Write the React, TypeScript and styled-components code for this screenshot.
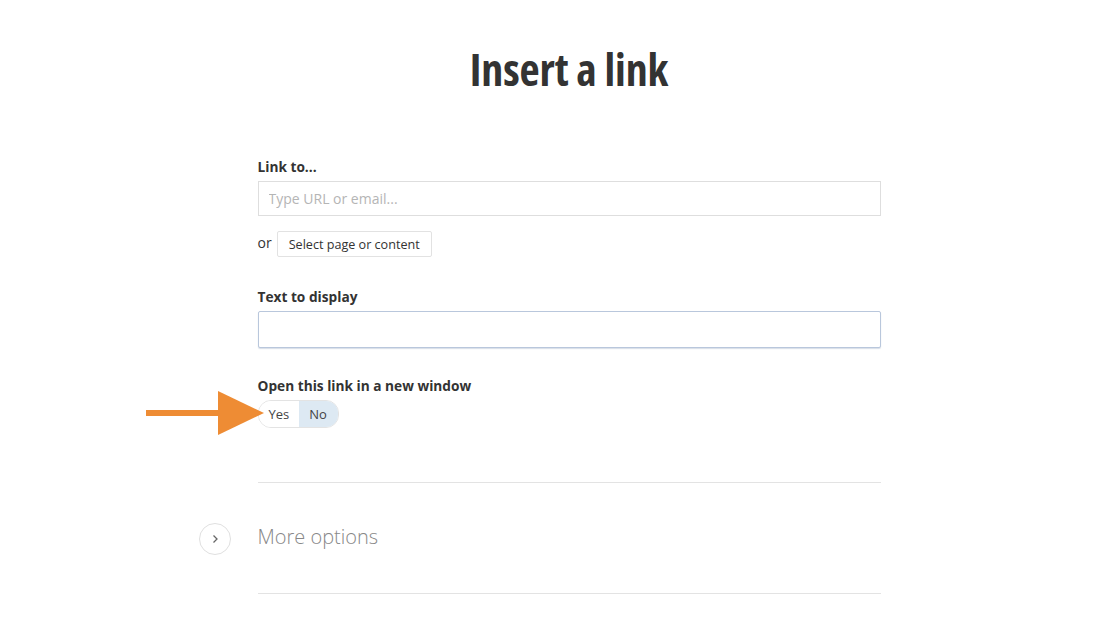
import * as React from 'react';
import styled, { createGlobalStyle } from 'styled-components';

const GlobalStyle = createGlobalStyle`
  html, body {
    margin: 0;
    padding: 0;
    background: #ffffff;
    font-family: "Open Sans", "Liberation Sans", sans-serif;
    color: #333;
  }
`;

const Page = styled.div`
  width: 1120px;
  height: 625px;
  overflow: hidden;
  display: flex;
  flex-direction: column;
  align-items: center;
`;

const Title = styled.h1`
  margin: 41px 0 0;
  font-family: "Open Sans", "Liberation Sans", sans-serif;
  font-stretch: 75%;
  font-weight: 700;
  font-size: 44px;
  line-height: 56px;
  color: #333;
  letter-spacing: -0.1px;
  transform: translateX(9px);
`;

const Form = styled.div`
  width: 623px;
  margin-top: 60px;
  margin-left: 18px;
  display: flex;
  flex-direction: column;
`;

const Field = styled.div<{ $gap?: number }>`
  display: flex;
  flex-direction: column;
  margin-bottom: ${p => p.$gap ?? 0}px;
`;

const Label = styled.label`
  font-size: 13.7px;
  font-weight: 700;
  color: #333;
  line-height: 20px;
  margin-bottom: 4px;
`;

const TextInput = styled.input<{ $focused?: boolean }>`
  box-sizing: border-box;
  width: 100%;
  height: ${p => (p.$focused ? 37 : 35)}px;
  border: 1px solid ${p => (p.$focused ? '#b9c7dc' : '#dedede')};
  border-radius: ${p => (p.$focused ? 2 : 0)}px;
  box-shadow: ${p => (p.$focused ? '0 1px 1px rgba(140,160,190,0.35)' : 'none')};
  padding: 0 10px;
  font-family: "Open Sans", "Liberation Sans", sans-serif;
  font-size: 14px;
  color: #333;
  outline: none;
  &::placeholder {
    color: #b5b5b5;
  }
`;

const OrRow = styled.div`
  display: flex;
  align-items: center;
  gap: 5px;
  margin-top: 15px;
  font-size: 14px;
  color: #333;
`;

const OrText = styled.span`
  transform: translateY(-2px);
`;

const SmallButton = styled.button`
  height: 26px;
  padding: 0 11px;
  background: #fff;
  border: 1px solid #e2e2e2;
  border-radius: 2px;
  font-family: "Open Sans", "Liberation Sans", sans-serif;
  font-size: 12.6px;
  color: #333;
`;

const ToggleRow = styled.div`
  position: relative;
  display: flex;
`;

const Toggle = styled.div`
  display: flex;
  height: 26px;
  border: 1px solid #e3e3e3;
  border-radius: 13px;
  overflow: hidden;
`;

const ToggleOption = styled.span<{ $active?: boolean }>`
  display: flex;
  align-items: center;
  padding: 0 ${p => (p.$active ? 11 : 10)}px 0 10px;
  font-size: 13px;
  color: #444;
  background: ${p => (p.$active ? '#dde9f3' : '#fff')};
`;

const Arrow = styled.svg`
  position: absolute;
  left: -112px;
  top: -9px;
`;

const Divider = styled.hr`
  width: 100%;
  border: none;
  border-top: 1px solid #e3e3e3;
  margin: 0;
`;

const MoreRow = styled.div`
  position: relative;
  height: 110px;
  display: flex;
  align-items: center;
`;

const Circle = styled.span`
  position: absolute;
  left: -59px;
  top: 40px;
  box-sizing: border-box;
  width: 32px;
  height: 32px;
  border: 1px solid #e0e0e0;
  border-radius: 50%;
  display: flex;
  align-items: center;
  justify-content: center;
`;

const MoreText = styled.span`
  font-size: 20px;
  font-weight: 300;
  color: #888888;
  transform: translateY(-2px);
`;

export default function App() {
  return (
    <Page>
      <GlobalStyle />
      <Title>Insert a link</Title>
      <Form>
        <Field $gap={30}>
          <Label>Link to...</Label>
          <TextInput placeholder="Type URL or email..." />
          <OrRow>
            <OrText>or</OrText>
            <SmallButton>Select page or content</SmallButton>
          </OrRow>
        </Field>
        <Field $gap={28}>
          <Label>Text to display</Label>
          <TextInput $focused />
        </Field>
        <Field $gap={54}>
          <Label>Open this link in a new window</Label>
          <ToggleRow>
            <Toggle>
              <ToggleOption>Yes</ToggleOption>
              <ToggleOption $active>No</ToggleOption>
            </Toggle>
            <Arrow width="118" height="44" viewBox="0 0 118 44">
              <rect x="0" y="19" width="74" height="6" fill="#ee8c34" />
              <polygon points="72,0 118,22 72,44" fill="#ee8c34" />
            </Arrow>
          </ToggleRow>
        </Field>
        <Divider />
        <MoreRow>
          <Circle>
            <svg width="10" height="10" viewBox="0 0 10 10">
              <path d="M3.5 1.5 L7 5 L3.5 8.5" fill="none" stroke="#666" strokeWidth="1.3" />
            </svg>
          </Circle>
          <MoreText>More options</MoreText>
        </MoreRow>
        <Divider />
      </Form>
    </Page>
  );
}
